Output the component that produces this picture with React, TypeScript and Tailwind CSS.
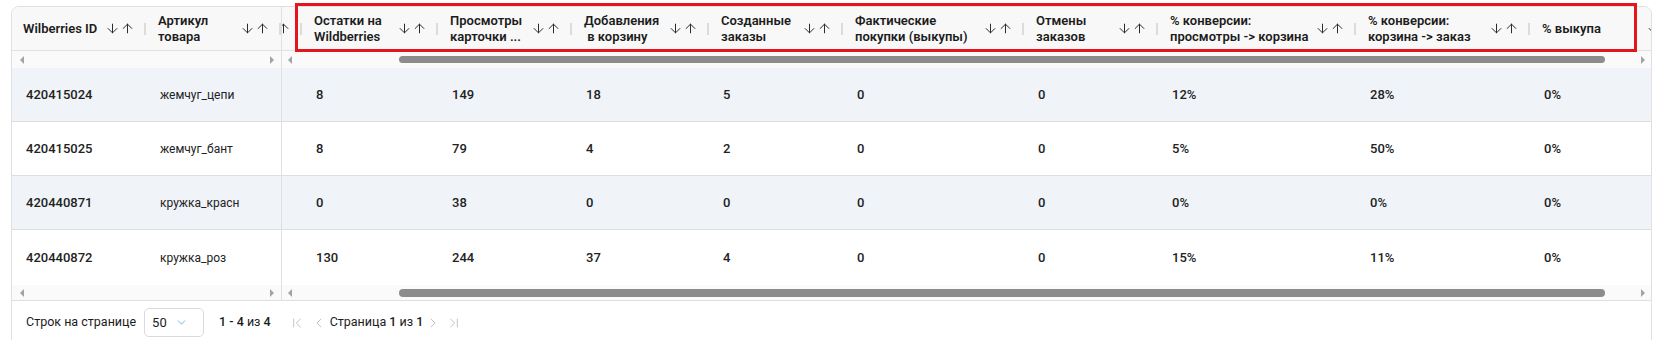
import { ArrowDown, ArrowUp, ChevronDown, ChevronFirst, ChevronLast, ChevronLeft, ChevronRight } from "lucide-react";

const cols = [
  { w: "w-[136px]", label: ["Остатки на", "Wildberries"] },
  { w: "w-[134px]", label: ["Просмотры", "карточки ..."] },
  { w: "w-[137px]", label: ["Добавления", "\u00a0в корзину"] },
  { w: "w-[134px]", label: ["Созданные", "заказы"] },
  { w: "w-[181px]", label: ["Фактические", "покупки (выкупы)"] },
  { w: "w-[134px]", label: ["Отмены", "заказов"] },
  { w: "w-[198px]", label: ["% конверсии:", "просмотры -> корзина"] },
  { w: "w-[174px]", label: ["% конверсии:", "корзина -> заказ"] },
  { w: "w-[157px]", label: ["% выкупа"] },
];

const rows = [
  { id: "420415024", art: "жемчуг_цепи", vals: ["8", "149", "18", "5", "0", "0", "12%", "28%", "0%"] },
  { id: "420415025", art: "жемчуг_бант", vals: ["8", "79", "4", "2", "0", "0", "5%", "50%", "0%"] },
  { id: "420440871", art: "кружка_красн", vals: ["0", "38", "0", "0", "0", "0", "0%", "0%", "0%"] },
  { id: "420440872", art: "кружка_роз", vals: ["130", "244", "37", "4", "0", "0", "15%", "11%", "0%"] },
];

function Sort() {
  return (
    <div className="flex shrink-0 text-[#2b2b2b]">
      <ArrowDown size={15} strokeWidth={1.6} />
      <ArrowUp size={15} strokeWidth={1.6} />
    </div>
  );
}

function Sep() {
  return (
    <>
      <div className="w-[9px] shrink-0" />
      <div className="w-[2px] h-3 shrink-0 bg-[#dcdcdc]" />
    </>
  );
}

function HeadCell({ w, lines, pl }: { w: string; lines: string[]; pl: string }) {
  return (
    <div className={`${w} shrink-0 h-full flex items-center`}>
      <div className={`flex-1 min-w-0 ${pl} leading-4 whitespace-nowrap`}>
        {lines.map((l) => (
          <div key={l}>{l}</div>
        ))}
      </div>
      <Sort />
      <Sep />
    </div>
  );
}

function Tri({ dir }: { dir: "l" | "r" }) {
  return (
    <svg width="4" height="8" viewBox="0 0 4 8" className="shrink-0">
      <polygon points={dir === "l" ? "4,0 4,8 0,4" : "0,0 0,8 4,4"} fill="#a3a3a3" />
    </svg>
  );
}

function rowClass(i: number) {
  const bg = i % 2 === 0 ? "bg-[#f0f4f9]" : "bg-white";
  const h = i === rows.length - 1 ? "h-[55px]" : "h-[54px] border-b border-[#dedede]";
  return `${bg} ${h} flex items-center`;
}

export default function App() {
  return (
    <div className="relative w-[1654px] h-[340px] overflow-hidden bg-white font-[Roboto,sans-serif] text-[#1c1c1c]">
      <div className="ml-[11px] mt-[6px] mr-[2px] rounded-t-lg border border-[#e0e0e0] overflow-hidden">
        <div className="flex">
          {/* frozen columns */}
          <div className="w-[270px] shrink-0 border-r border-[#e0e0e0]">
            <div className="h-[44px] bg-[#f8f8f8] border-b border-[#e2e2e2] flex text-[13px] font-semibold">
              <HeadCell w="w-[134px]" lines={["Wilberries ID"]} pl="pl-[11px]" />
              <HeadCell w="w-[135px]" lines={["Артикул", "товара"]} pl="pl-[12px]" />
            </div>
            <div className="h-[17px] bg-[#fafafa] flex items-center justify-between pl-[8px] pr-[7px]">
              <Tri dir="l" />
              <Tri dir="r" />
            </div>
            {rows.map((r, i) => (
              <div key={r.id} className={rowClass(i)}>
                <div className="w-[134px] pl-[14px] text-[13px] font-medium text-[#222]">{r.id}</div>
                <div className="flex-1 pl-[14px] text-[12px] text-[#222]">{r.art}</div>
              </div>
            ))}
            <div className="h-[15px] bg-[#fafafa] flex items-center justify-between pl-[8px] pr-[7px]">
              <Tri dir="l" />
              <Tri dir="r" />
            </div>
          </div>

          {/* scrolled columns */}
          <div className="flex-1 min-w-0 overflow-hidden">
            <div className="h-[44px] bg-[#f8f8f8] border-b border-[#e2e2e2] flex text-[13px] font-semibold">
              <div className="w-[20px] shrink-0 h-full flex items-center justify-end overflow-hidden">
                <Sort />
                <Sep />
              </div>
              {cols.map((c) => (
                <HeadCell key={c.label[0] + c.label[1]} w={c.w} lines={c.label} pl="pl-[12px]" />
              ))}
            </div>
            <div className="h-[17px] bg-[#fafafa] flex items-center pl-[6px] pr-[6px]">
              <Tri dir="l" />
              <div className="ml-[107px] w-[1206px] h-[7px] rounded-full bg-[#8c8c8c]" />
              <div className="flex-1" />
              <Tri dir="r" />
            </div>
            {rows.map((r, i) => (
              <div key={r.id} className={rowClass(i)}>
                <div className="w-[20px] shrink-0" />
                {r.vals.map((v, j) => (
                  <div key={j} className={`${cols[j].w} shrink-0 pl-[14px] text-[13px] font-medium text-[#222]`}>
                    {v}
                  </div>
                ))}
              </div>
            ))}
            <div className="h-[15px] bg-[#fafafa] flex items-center pl-[6px] pr-[6px]">
              <Tri dir="l" />
              <div className="ml-[107px] w-[1206px] h-[8px] rounded-full bg-[#8c8c8c]" />
              <div className="flex-1" />
              <Tri dir="r" />
            </div>
          </div>
        </div>

        {/* footer */}
        <div className="h-[44px] border-t border-[#e0e0e0] flex items-center pl-[14px] text-[12.5px]">
          <span>Строк на странице</span>
          <div className="ml-[8px] w-[60px] h-[29px] border border-[#dadada] rounded-[5px] flex items-center justify-between pl-[7px] pr-[15px]">
            <span className="text-[13px]">50</span>
            <ChevronDown size={13} strokeWidth={1.5} className="text-[#4aa3df]" />
          </div>
          <span className="ml-[15px]">
            <span className="font-medium">1 - 4</span> из <span className="font-medium">4</span>
          </span>
          <div className="ml-[18px] flex items-center text-[#c4c4c4]">
            <ChevronFirst size={16} strokeWidth={1.5} />
            <ChevronLeft size={16} strokeWidth={1.5} className="ml-[6px]" />
          </div>
          <span className="ml-[3px]">
            Страница <span className="font-medium">1</span> из <span className="font-medium">1</span>
          </span>
          <div className="ml-[2px] flex items-center text-[#c4c4c4]">
            <ChevronRight size={16} strokeWidth={1.5} />
            <ChevronLast size={16} strokeWidth={1.5} className="ml-[5px]" />
          </div>
        </div>
      </div>

      {/* highlight annotation */}
      <div className="pointer-events-none absolute left-[295px] top-[3px] w-[1342px] h-[49px] border-[3px] border-[#e3161e]" />
    </div>
  );
}
